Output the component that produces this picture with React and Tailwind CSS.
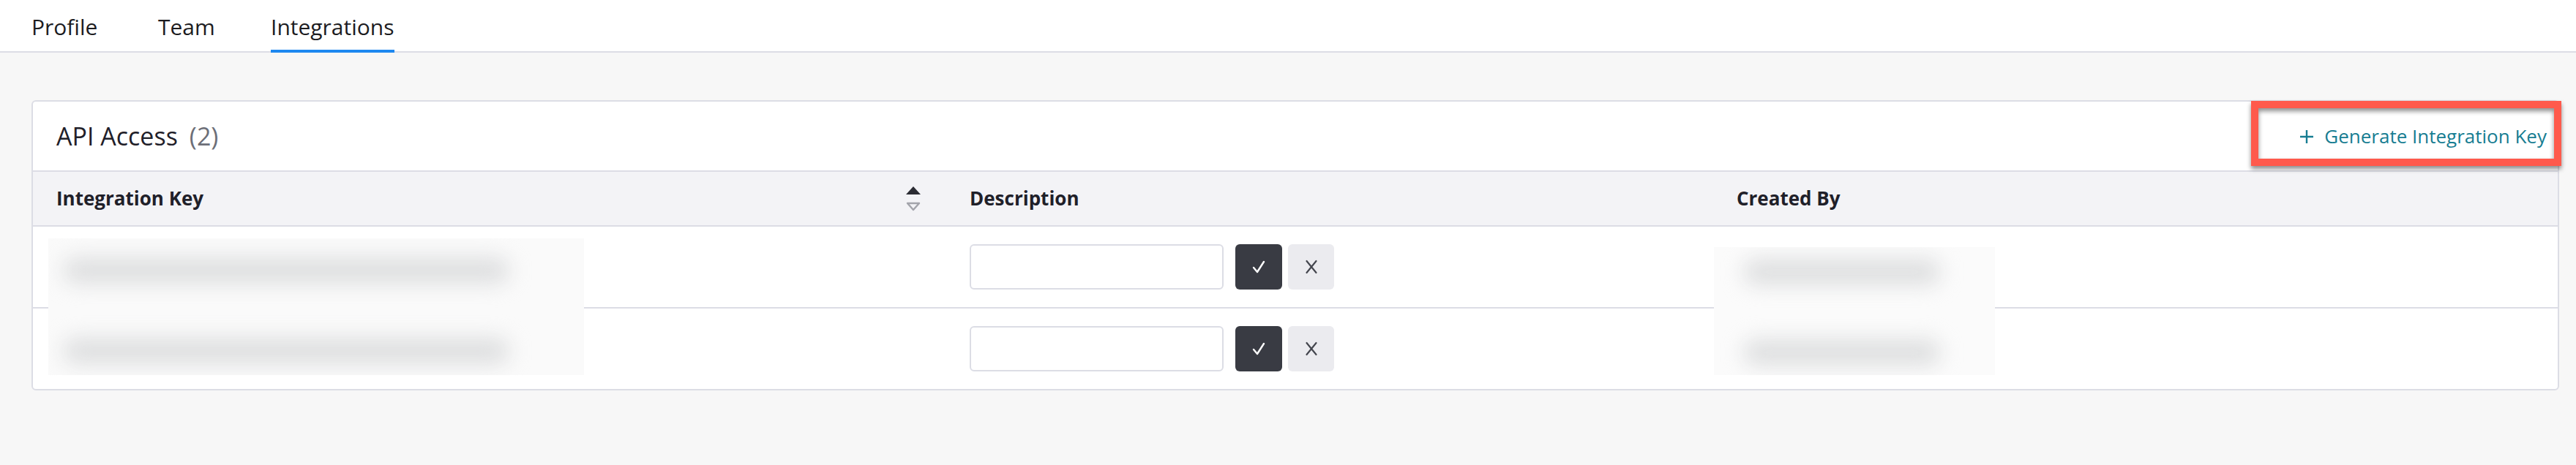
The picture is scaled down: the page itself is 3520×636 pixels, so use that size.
const FONT = { fontFamily: '"Open Sans", "Liberation Sans", Arial, sans-serif' };

/* ----------------- Icons ----------------- */

function SortIcon() {
  return (
    <svg width="20" height="34" viewBox="0 0 20 34">
      <polygon points="10,0 20,11 0,11" fill="#2b2c33" />
      <polygon points="2,23 18,23 10,32" fill="none" stroke="#a3a4ab" strokeWidth="2.4" strokeLinejoin="round" />
    </svg>
  );
}

function CheckIcon() {
  return (
    <svg width="20" height="20" viewBox="0 0 20 20">
      <path d="M3 11 L8 17 L17 3" fill="none" stroke="#ffffff" strokeWidth="2.4" strokeLinecap="round" strokeLinejoin="round" />
    </svg>
  );
}

function XIcon() {
  return (
    <svg width="18" height="20" viewBox="0 0 18 20">
      <path d="M2.5 2 L15.5 18 M15.5 2 L2.5 18" fill="none" stroke="#44464e" strokeWidth="2.2" strokeLinecap="round" />
    </svg>
  );
}

/* ----------------- Pieces ----------------- */

function Tab({ label, active, width }) {
  return (
    <div className={`h-[72px] -mb-[2px] ${width}`}>
      <div
        className={`inline-flex h-full items-center pt-[4px] border-b-4 text-[30px] text-[#1c1c1f] ${
          active ? "border-[#1e88f0] font-medium" : "border-transparent"
        }`}
      >
        {label}
      </div>
    </div>
  );
}

function KeyRow({ last }) {
  return (
    <div className={`flex ${last ? "h-[110px]" : "h-[112px] border-b-2 border-[#dcdde5]"}`}>
      <div className="w-[1246px]" />
      <div className="w-[1048px] flex items-center pl-[34px]">
        <input className="w-[347px] h-[62px] border-2 border-[#dcdde5] rounded-[6px] bg-white outline-none" />
        <button className="ml-[16px] w-[64px] h-[62px] rounded-[6px] bg-[#393b43] flex items-center justify-center">
          <CheckIcon />
        </button>
        <button className="ml-[8px] w-[63px] h-[62px] rounded-[6px] bg-[#ebebef] flex items-center justify-center">
          <XIcon />
        </button>
      </div>
      <div className="flex-1" />
    </div>
  );
}

/* ----------------- Page ----------------- */

export default function App() {
  return (
    <div className="min-h-screen w-full bg-[#f7f7f7] pb-[40px]" style={FONT}>
      {/* Tabs */}
      <div className="h-[72px] bg-white border-b-2 border-[#dcdde5] flex pl-[43px]">
        <Tab label="Profile" width="w-[173px]" />
        <Tab label="Team" width="w-[154px]" />
        <Tab label="Integrations" active />
      </div>

      {/* API Access card */}
      <div className="ml-[43px] mr-[23px] mt-[65px] bg-white border-2 border-[#dcdde5] rounded-[6px]">
        <div className="h-[96px] flex items-start justify-between border-b-2 border-[#dcdde5] pl-[32px] pr-[5px]">
          <div className="self-center text-[34px] text-[#1f2029] flex items-baseline gap-[16px]">
            <span>API Access</span>
            <span className="text-[#6d6f78]">(2)</span>
          </div>
          <div className="relative mt-[9px]">
            <button className="w-[404px] h-[69px] flex items-center justify-end gap-[14px] pr-[10px] pt-[8px] text-[26px] font-medium text-[#177d92]">
              <svg width="20" height="20" viewBox="0 0 20 20">
                <path d="M10 1 V19 M1 10 H19" stroke="#177d92" strokeWidth="2.4" />
              </svg>
              <span>Generate Integration Key</span>
            </button>
            {/* highlight annotation */}
            <span className="pointer-events-none absolute -inset-[10px] border-[10px] border-[#ff5a4c] shadow-[0_4px_6px_rgba(0,0,0,0.45),inset_0_4px_6px_rgba(0,0,0,0.45)]" />
          </div>
        </div>

        {/* Table header */}
        <div className="flex h-[75px] bg-[#f3f3f6] border-b-2 border-[#dcdde5] text-[26px] font-bold text-[#1f2029]">
          <div className="w-[1246px] flex items-center justify-between pl-[32px] pr-[33px]">
            <span>Integration Key</span>
            <SortIcon />
          </div>
          <div className="w-[1048px] flex items-center pl-[34px]">Description</div>
          <div className="flex-1 flex items-center pl-[34px]">Created By</div>
        </div>

        {/* Rows */}
        <div className="relative">
          <KeyRow />
          <KeyRow last />

          {/* redacted keys */}
          <div className="absolute left-[21px] top-[16px] w-[732px] h-[187px] bg-[#fafafa] overflow-hidden">
            <div className="absolute left-[20px] top-[26px] w-[610px] h-[36px] rounded-full bg-[#dedfe0] blur-[14px]" />
            <div className="absolute left-[20px] top-[136px] w-[610px] h-[36px] rounded-full bg-[#dedfe0] blur-[14px]" />
          </div>

          {/* redacted creators */}
          <div className="absolute left-[2297px] top-[28px] w-[384px] h-[175px] bg-[#fbfbfb] overflow-hidden">
            <div className="absolute left-[40px] top-[16px] w-[270px] h-[36px] rounded-full bg-[#dedfe0] blur-[14px]" />
            <div className="absolute left-[40px] top-[126px] w-[270px] h-[36px] rounded-full bg-[#dedfe0] blur-[14px]" />
          </div>
        </div>
      </div>
    </div>
  );
}
